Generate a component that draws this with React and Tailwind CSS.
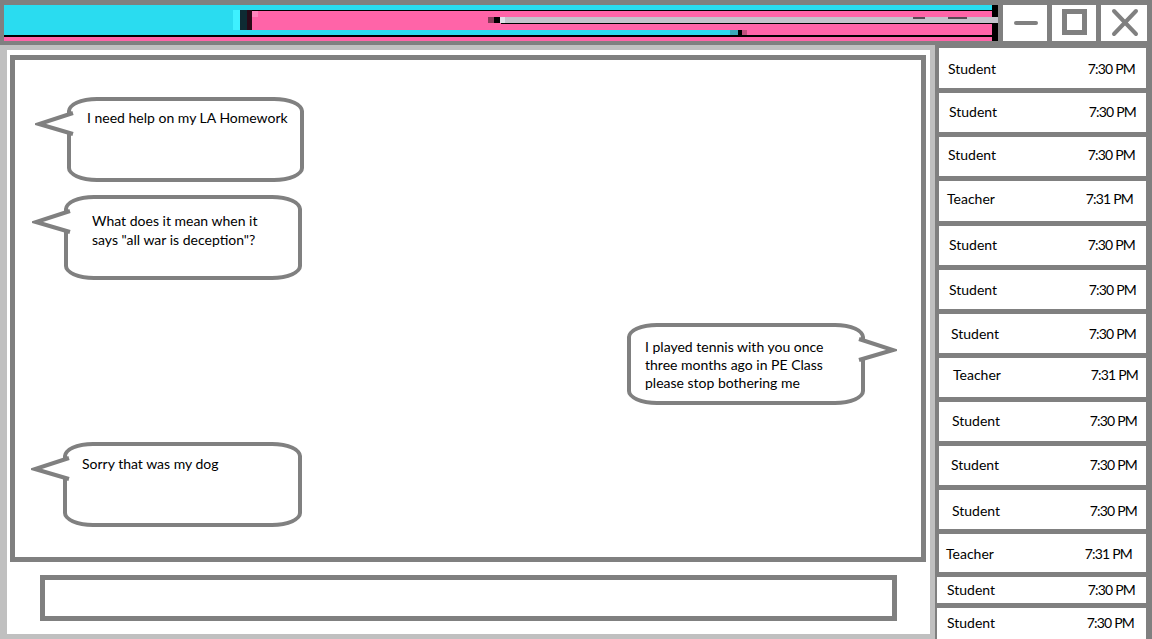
import React from "react";

const rows = [
  { n: "Student", t: "7:30 PM", h: 40, pl: 9, pr: 11, dy: 0 },
  { n: "Student", t: "7:30 PM", h: 39, pl: 10, pr: 10, dy: 2 },
  { n: "Student", t: "7:30 PM", h: 39, pl: 9, pr: 11, dy: 4 },
  { n: "Teacher", t: "7:31 PM", h: 40, pl: 8, pr: 13, dy: 6 },
  { n: "Student", t: "7:30 PM", h: 39, pl: 10, pr: 11, dy: 2 },
  { n: "Student", t: "7:30 PM", h: 39, pl: 10, pr: 10, dy: 0 },
  { n: "Student", t: "7:30 PM", h: 39, pl: 12, pr: 10, dy: 0 },
  { n: "Teacher", t: "7:31 PM", h: 39, pl: 14, pr: 8, dy: 6 },
  { n: "Student", t: "7:30 PM", h: 39, pl: 13, pr: 9, dy: 2 },
  { n: "Student", t: "7:30 PM", h: 39, pl: 12, pr: 9, dy: 2 },
  { n: "Student", t: "7:30 PM", h: 39, pl: 13, pr: 9, dy: -2 },
  { n: "Teacher", t: "7:31 PM", h: 38, pl: 7, pr: 14, dy: 0 },
  { n: "Student", t: "7:30 PM", h: 26, pl: 10, pr: 11, dy: 2, wide: true },
  { n: "Student", t: "7:30 PM", h: 31, pl: 10, pr: 12, dy: 2, wide: true },
];

// tail drawn as a little svg hanging off the bubble edge
function Tail({ right }) {
  return (
    <svg
      width="40"
      height="45"
      viewBox="0 0 40 45"
      className={
        right
          ? "absolute right-[-36px] top-0 -scale-x-100"
          : "absolute left-[-36px] top-0"
      }
    >
      <polygon points="38,12 4,23 38,33" fill="white" />
      <rect x="35" y="14" width="6" height="17" fill="white" />
      <polyline
        points="38,12 4,23 38,33"
        fill="none"
        stroke="#808080"
        strokeWidth="4"
        strokeLinejoin="miter"
      />
    </svg>
  );
}

function Bubble({ lines, className, pad, right }) {
  return (
    <div
      className={`relative shrink-0 bg-white border-4 border-[#808080] rounded-[30px/14px] text-[14px] leading-[18px] text-black ${className}`}
    >
      <Tail right={right} />
      <div className={`relative ${pad}`}>
        {lines.map((l, i) => (
          <div key={i}>{l}</div>
        ))}
      </div>
    </div>
  );
}

function TitleStripes() {
  return (
    <div className="flex h-[36px] w-[994px]">
      <div className="flex flex-col w-[988px]">
        <div className="h-[5px] bg-[#2adcf0]" />
        <div className="flex h-[20px]">
          <div className="w-[229px] bg-[#2adcf0]" />
          <div className="w-[7px] bg-[#3ef0ff]" />
          <div className="w-[7px] bg-[#0e2b33]" />
          <div className="w-[5px] bg-[#2a0a18]" />
          <div className="flex flex-col flex-1 border-t border-black bg-[#ff64a8]">
            <div className="h-[6px] flex">
              <div className="w-[6px] bg-[#ff84bd]" />
            </div>
            <div className="flex h-[6px]">
              <div className="w-[236px]" />
              <div className="w-[6px] bg-[#8a3a5a]" />
              <div className="w-[6px] bg-black" />
              <div className="w-[5px] bg-[#e2e2ea]" />
              <div className="flex-1 bg-[#c4c4cc] flex">
                <div className="w-[408px]" />
                <div className="w-[12px] h-[2px] bg-[#5a4a55]" />
                <div className="w-[23px]" />
                <div className="w-[19px] h-[2px] bg-[#5a4a55]" />
              </div>
            </div>
            <div className="h-px flex">
              <div className="w-[249px]" />
              <div className="flex-1 bg-black" />
            </div>
            <div className="flex-1" />
          </div>
        </div>
        <div className="flex h-[5px]">
          <div className="w-[726px] bg-[#2adcf0]" />
          <div className="w-[8px] bg-[#3aa8b8]" />
          <div className="w-[4px] bg-black" />
          <div className="w-[5px] bg-[#c4507e]" />
          <div className="flex-1 bg-[#ff64a8]" />
        </div>
        <div className="h-[2px] bg-black" />
        <div className="h-[4px] bg-[#ff64a8]" />
      </div>
      <div className="w-[6px] flex flex-col">
        <div className="h-[12px] bg-black" />
        <div className="h-[6px] bg-[#c4c4cc]" />
        <div className="flex-1 bg-black" />
      </div>
    </div>
  );
}

function WinButton({ w, vb, children }) {
  return (
    <div className={`h-[36px] ${w} bg-white shrink-0`}>
      <svg width="100%" height="36" viewBox={vb}>
        {children}
      </svg>
    </div>
  );
}

export default function App() {
  return (
    <div className="w-[1152px] h-[639px] bg-[#808080] flex flex-col overflow-hidden font-['Lato',sans-serif]">
      {/* window title bar */}
      <div className="flex h-[45px] pt-[5px] pl-[4px] gap-[5px] shrink-0">
        <TitleStripes />
        <WinButton w="w-[44px]" vb="0 0 44 36">
          <line x1="13" y1="18" x2="33" y2="18" stroke="#808080" strokeWidth="4" strokeLinecap="round" />
        </WinButton>
        <WinButton w="w-[44px]" vb="0 0 44 36">
          <rect x="12.5" y="6.5" width="20" height="21" fill="none" stroke="#808080" strokeWidth="5" />
        </WinButton>
        <WinButton w="w-[46px]" vb="0 0 46 36">
          <line x1="13" y1="6" x2="35" y2="29" stroke="#808080" strokeWidth="4" strokeLinecap="round" />
          <line x1="35" y1="6" x2="13" y2="29" stroke="#808080" strokeWidth="4" strokeLinecap="round" />
        </WinButton>
      </div>

      <div className="flex flex-1 min-h-0">
        {/* chat panel */}
        <div className="w-[935px] h-[594px] bg-white border-[5px] border-l-[7px] border-[#c0c0c0] pt-[5px] pl-[3px] pr-[4px] flex flex-col">
          <div className="h-[507px] border-[5px] border-[#808080] flex flex-col">
            <Bubble
              className="ml-[52px] mt-[37px] w-[237px] h-[85px]"
              pad="pl-[16px] pt-[8px]"
              lines={["I need help on my LA Homework"]}
            />
            <Bubble
              className="ml-[49px] mt-[13px] w-[238px] h-[85px]"
              pad="pl-[24px] pt-[12px] leading-[19px]"
              lines={["What does it mean when it", 'says "all war is deception"?']}
            />
            <Bubble
              right
              className="self-end mr-[56px] mt-[43px] w-[238px] h-[82px]"
              pad="pl-[14px] pt-[11px]"
              lines={["I played tennis with you once", "three months ago in PE Class", "please stop bothering me"]}
            />
            <Bubble
              className="ml-[48px] mt-[37px] w-[239px] h-[85px]"
              pad="pl-[15px] pt-[9px]"
              lines={["Sorry that was my dog"]}
            />
          </div>
          <div className="mt-[13px] ml-[30px] w-[857px] h-[46px] border-[5px] border-[#808080] bg-white" />
        </div>

        {/* message log */}
        <div className="flex flex-col gap-[5px] pt-[3px] pl-[4px] w-[217px]">
          {rows.map((r, i) => (
            <div
              key={i}
              className={`bg-white shrink-0 flex items-center justify-between text-[14px] text-black ${
                r.wide ? "w-[209px] -ml-[2px]" : "w-[207px]"
              }`}
              style={{
                height: r.h,
                paddingLeft: r.pl,
                paddingRight: r.pr,
                paddingBottom: r.dy > 0 ? r.dy : 0,
                paddingTop: r.dy < 0 ? -r.dy : 0,
              }}
            >
              <span>{r.n}</span>
              <span className="tracking-[-0.8px]">{r.t}</span>
            </div>
          ))}
        </div>
      </div>
    </div>
  );
}
